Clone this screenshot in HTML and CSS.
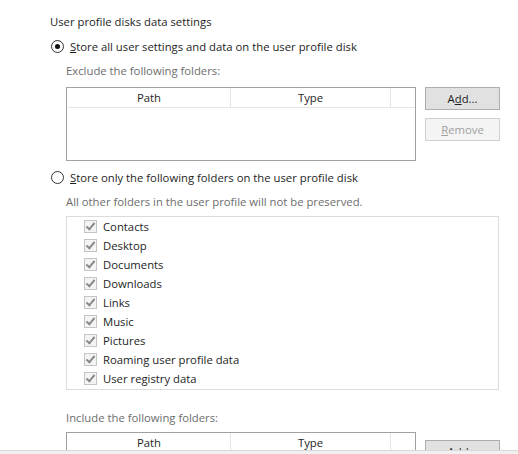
FILE: index.html
```html
<!DOCTYPE html>
<html lang="en">
<head>
    <meta charset="UTF-8">
    <title>User profile disks</title>
    <link rel="stylesheet" href="styles.css">
</head>
<body>
    <div class="page">
        <div class="section-title">User profile disks data settings</div>

        <label class="radio-row">
            <span class="radio checked"></span>
            <span><u>S</u>tore all user settings and data on the user profile disk</span>
        </label>

        <div class="indent">
            <div class="hint">Exclude the following folders:</div>
            <div class="list-row">
                <div class="listview">
                    <div class="lv-header">
                        <div class="col col-path">Path</div>
                        <div class="col col-type">Type</div>
                        <div class="col col-rest"></div>
                    </div>
                </div>
                <div class="buttons">
                    <button class="btn">A<u>d</u>d...</button>
                    <button class="btn" disabled><u>R</u>emove</button>
                </div>
            </div>
        </div>

        <label class="radio-row second">
            <span class="radio"></span>
            <span><u>S</u>tore only the following folders on the user profile disk</span>
        </label>

        <div class="indent">
            <div class="hint">All other folders in the user profile will not be preserved.</div>
            <div class="checklist">
                <div class="check-item"><span class="check"></span>Contacts</div>
                <div class="check-item"><span class="check"></span>Desktop</div>
                <div class="check-item"><span class="check"></span>Documents</div>
                <div class="check-item"><span class="check"></span>Downloads</div>
                <div class="check-item"><span class="check"></span>Links</div>
                <div class="check-item"><span class="check"></span>Music</div>
                <div class="check-item"><span class="check"></span>Pictures</div>
                <div class="check-item"><span class="check"></span>Roaming user profile data</div>
                <div class="check-item"><span class="check"></span>User registry data</div>
            </div>

            <div class="hint include">Include the following folders:</div>
            <div class="list-row tight">
                <div class="listview">
                    <div class="lv-header">
                        <div class="col col-path">Path</div>
                        <div class="col col-type">Type</div>
                        <div class="col col-rest"></div>
                    </div>
                </div>
                <div class="buttons lower">
                    <button class="btn">A<u>d</u>d...</button>
                </div>
            </div>
        </div>
    </div>
    <div class="window-edge"></div>
</body>
</html>
```

FILE: styles.css
```css
html, body {
    margin: 0;
    padding: 0;
    background: #ffffff;
    overflow: hidden;
    height: 100%;
}

body {
    font-family: "Open Sans", "Noto Sans", sans-serif;
    font-size: 11.3px;
    color: #1e1e1e;
}

.page {
    padding: 14px 0 0 50px;
}

.section-title {
    line-height: 16px;
}

.radio-row {
    display: flex;
    align-items: center;
    gap: 6px;
    height: 16px;
    margin-top: 8px;
    margin-left: 1px;
}

.radio {
    width: 11px;
    height: 11px;
    border: 1px solid #333;
    border-radius: 50%;
    background: #fff;
    display: flex;
    align-items: center;
    justify-content: center;
}

.radio.checked::after {
    content: "";
    width: 5px;
    height: 5px;
    border-radius: 50%;
    background: #111;
}

.indent {
    padding-left: 16px;
}

.hint {
    color: #6d6d6d;
    line-height: 16px;
    margin-top: 9px;
}

.list-row {
    display: flex;
    align-items: flex-start;
    gap: 9px;
    margin-top: 8px;
}

.list-row.tight {
    margin-top: 6px;
}

.listview {
    width: 348px;
    height: 72px;
    border: 1px solid #a0a0a0;
    background: #fff;
}

.lv-header {
    display: flex;
    height: 19px;
    border-bottom: 1px solid #e5e5e5;
    margin-left: 1px;
}

.col {
    line-height: 19px;
    text-align: center;
    border-right: 1px solid #e5e5e5;
}

.col-path {
    width: 162px;
}

.col-type {
    width: 159px;
}

.col-rest {
    flex: 1;
    border-right: none;
}

.buttons {
    display: flex;
    flex-direction: column;
    gap: 8px;
}

.buttons.lower {
    margin-top: 8px;
}

.btn {
    width: 75px;
    height: 23px;
    padding: 0;
    font-family: inherit;
    font-size: 11.3px;
    color: #1e1e1e;
    background: #e1e1e1;
    border: 1px solid #adadad;
}

.btn:disabled {
    background: #f4f4f4;
    border-color: #d0d0d0;
    color: #a0a0a0;
}

.checklist {
    box-sizing: border-box;
    width: 433px;
    height: 174px;
    margin-top: 6px;
    border: 1px solid #dcdcdc;
}

.check-item {
    display: flex;
    align-items: center;
    gap: 6px;
    height: 19px;
    padding-left: 17px;
}

.check {
    width: 11px;
    height: 11px;
    border: 1px solid #c4c4c4;
    background: #f4f4f4;
    position: relative;
}

.check::after {
    content: "";
    position: absolute;
    left: 3px;
    top: 0px;
    width: 3px;
    height: 7px;
    border-right: 2px solid #8a8a8a;
    border-bottom: 2px solid #8a8a8a;
    transform: rotate(40deg);
}

.hint.include {
    margin-top: 20px;
}

.window-edge {
    position: fixed;
    left: 0;
    right: 0;
    bottom: 0;
    height: 3px;
    background: #f0f0f0;
    border-top: 1px solid #d9d9d9;
}
```
